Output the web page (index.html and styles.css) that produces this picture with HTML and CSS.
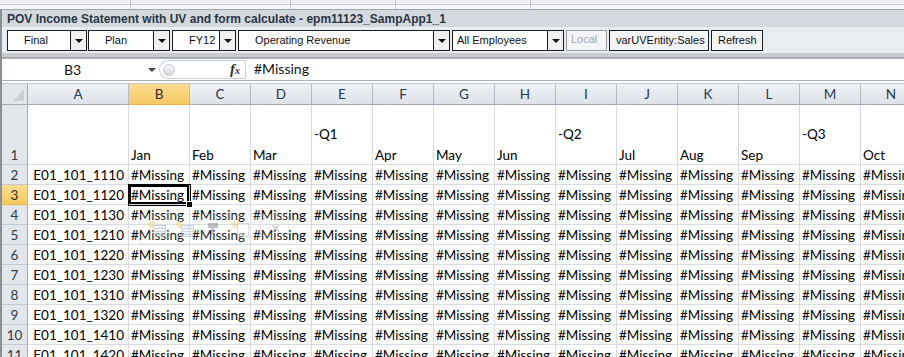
FILE: index.html
```html
<!doctype html>
<html lang="en">
  <head>
    <meta charset="UTF-8" />
    <title>POV Income Statement</title>
    <link rel="stylesheet" href="styles.css">
  </head>
  <body>
    <div class="ribbon-edge">
      <div class="group g1"><span>Start</span></div>
      <div class="group g2"><span>Edit</span></div>
      <div class="group g3"><span>Data</span></div>
      <div class="group g4"><span>General</span></div>
    </div>

    <div class="app">
      <div class="pane-title">POV Income Statement with UV and form calculate - epm11123_SampApp1_1</div>

      <div class="pov-bar">
        <div class="pov w-final"><span class="pov-text">Final</span><span class="pov-arrow"></span></div>
        <div class="pov w-plan"><span class="pov-text">Plan</span><span class="pov-arrow"></span></div>
        <div class="pov w-year"><span class="pov-text">FY12</span><span class="pov-arrow"></span></div>
        <div class="pov w-acct"><span class="pov-text">Operating Revenue</span><span class="pov-arrow"></span></div>
        <div class="pov w-emp"><span class="pov-text left">All Employees</span><span class="pov-arrow"></span></div>
        <div class="pov-btn disabled w-local">Local</div>
        <div class="pov-btn w-var">varUVEntity:Sales</div>
        <div class="pov-btn w-refresh">Refresh</div>
      </div>

      <div class="formula-bar">
        <div class="name-box"><span class="name">B3</span><span class="name-arrow"></span></div>
        <div class="fx-pill"><span class="knob"></span><span class="fx"><i>f</i><small>x</small></span></div>
        <div class="formula">#Missing</div>
      </div>

      <div class="sheet-wrap">
        <div class="sheet">
          <div class="corner"><span class="corner-tri"></span></div>
          <div class="ch">A</div><div class="ch sel">B</div><div class="ch">C</div><div class="ch">D</div><div class="ch">E</div><div class="ch">F</div><div class="ch">G</div><div class="ch">H</div><div class="ch">I</div><div class="ch">J</div><div class="ch">K</div><div class="ch">L</div><div class="ch">M</div><div class="ch">N</div>

          <div class="rh">1</div>
          <div class="c"></div><div class="c">Jan</div><div class="c">Feb</div><div class="c">Mar</div><div class="c q">-Q1<br>&nbsp;</div><div class="c">Apr</div><div class="c">May</div><div class="c">Jun</div><div class="c q">-Q2<br>&nbsp;</div><div class="c">Jul</div><div class="c">Aug</div><div class="c">Sep</div><div class="c q">-Q3<br>&nbsp;</div><div class="c">Oct</div>

          <div class="rh">2</div>
          <div class="c ra">E01_101_1110</div><div class="c">#Missing</div><div class="c">#Missing</div><div class="c">#Missing</div><div class="c">#Missing</div><div class="c">#Missing</div><div class="c">#Missing</div><div class="c">#Missing</div><div class="c">#Missing</div><div class="c">#Missing</div><div class="c">#Missing</div><div class="c">#Missing</div><div class="c">#Missing</div><div class="c">#Missing</div>

          <div class="rh sel">3</div>
          <div class="c ra">E01_101_1120</div><div class="c active">#Missing<span class="handle"></span></div><div class="c">#Missing</div><div class="c">#Missing</div><div class="c">#Missing</div><div class="c">#Missing</div><div class="c">#Missing</div><div class="c">#Missing</div><div class="c">#Missing</div><div class="c">#Missing</div><div class="c">#Missing</div><div class="c">#Missing</div><div class="c">#Missing</div><div class="c">#Missing</div>

          <div class="rh">4</div>
          <div class="c ra">E01_101_1130</div><div class="c">#Missing</div><div class="c">#Missing</div><div class="c">#Missing</div><div class="c">#Missing</div><div class="c">#Missing</div><div class="c">#Missing</div><div class="c">#Missing</div><div class="c">#Missing</div><div class="c">#Missing</div><div class="c">#Missing</div><div class="c">#Missing</div><div class="c">#Missing</div><div class="c">#Missing</div>

          <div class="rh">5</div>
          <div class="c ra">E01_101_1210</div><div class="c">#Missing</div><div class="c">#Missing</div><div class="c">#Missing</div><div class="c">#Missing</div><div class="c">#Missing</div><div class="c">#Missing</div><div class="c">#Missing</div><div class="c">#Missing</div><div class="c">#Missing</div><div class="c">#Missing</div><div class="c">#Missing</div><div class="c">#Missing</div><div class="c">#Missing</div>

          <div class="rh">6</div>
          <div class="c ra">E01_101_1220</div><div class="c">#Missing</div><div class="c">#Missing</div><div class="c">#Missing</div><div class="c">#Missing</div><div class="c">#Missing</div><div class="c">#Missing</div><div class="c">#Missing</div><div class="c">#Missing</div><div class="c">#Missing</div><div class="c">#Missing</div><div class="c">#Missing</div><div class="c">#Missing</div><div class="c">#Missing</div>

          <div class="rh">7</div>
          <div class="c ra">E01_101_1230</div><div class="c">#Missing</div><div class="c">#Missing</div><div class="c">#Missing</div><div class="c">#Missing</div><div class="c">#Missing</div><div class="c">#Missing</div><div class="c">#Missing</div><div class="c">#Missing</div><div class="c">#Missing</div><div class="c">#Missing</div><div class="c">#Missing</div><div class="c">#Missing</div><div class="c">#Missing</div>

          <div class="rh">8</div>
          <div class="c ra">E01_101_1310</div><div class="c">#Missing</div><div class="c">#Missing</div><div class="c">#Missing</div><div class="c">#Missing</div><div class="c">#Missing</div><div class="c">#Missing</div><div class="c">#Missing</div><div class="c">#Missing</div><div class="c">#Missing</div><div class="c">#Missing</div><div class="c">#Missing</div><div class="c">#Missing</div><div class="c">#Missing</div>

          <div class="rh">9</div>
          <div class="c ra">E01_101_1320</div><div class="c">#Missing</div><div class="c">#Missing</div><div class="c">#Missing</div><div class="c">#Missing</div><div class="c">#Missing</div><div class="c">#Missing</div><div class="c">#Missing</div><div class="c">#Missing</div><div class="c">#Missing</div><div class="c">#Missing</div><div class="c">#Missing</div><div class="c">#Missing</div><div class="c">#Missing</div>

          <div class="rh">10</div>
          <div class="c ra">E01_101_1410</div><div class="c">#Missing</div><div class="c">#Missing</div><div class="c">#Missing</div><div class="c">#Missing</div><div class="c">#Missing</div><div class="c">#Missing</div><div class="c">#Missing</div><div class="c">#Missing</div><div class="c">#Missing</div><div class="c">#Missing</div><div class="c">#Missing</div><div class="c">#Missing</div><div class="c">#Missing</div>

          <div class="rh">11</div>
          <div class="c ra">E01_101_1420</div><div class="c">#Missing</div><div class="c">#Missing</div><div class="c">#Missing</div><div class="c">#Missing</div><div class="c">#Missing</div><div class="c">#Missing</div><div class="c">#Missing</div><div class="c">#Missing</div><div class="c">#Missing</div><div class="c">#Missing</div><div class="c">#Missing</div><div class="c">#Missing</div><div class="c">#Missing</div>
        </div>

        <!-- faded paste options toolbar -->
        <div class="mini-toolbar">
          <span class="mt-icon"><span class="spark"></span><span class="sheet-ico"></span></span>
          <span class="mt-icon"><span class="spark"></span><span class="sheet-ico"></span></span>
          <span class="mt-icon"><span class="brush"></span></span>
          <span class="mt-icon"><span class="spark"></span><span class="doc-ico"></span></span>
          <span class="mt-sep"></span>
          <span class="mt-x">&#215;</span>
        </div>
      </div>
    </div>
  </body>
</html>
```

FILE: styles.css
```css
html,
body {
  margin: 0;
  padding: 0;
  background: #ffffff;
  overflow: hidden;
}

body {
  width: 904px;
  height: 357px;
  font-family: "Liberation Sans", Arial, sans-serif;
}

/* bottom edge of the ribbon, only the label feet are visible */
.ribbon-edge {
  display: flex;
  height: 9px;
  background: #eef0f3;
  border-bottom: 1px solid #9ea4ab;
  box-shadow: inset 0 -4px 0 #f6f7f9, inset 0 -5px 0 #c3c8cf;
  overflow: hidden;
}

.group {
  border-right: 1px solid #c3c8cf;
  text-align: center;
  font-size: 12px;
  color: #4c5a6b;
}

.group span {
  display: block;
  margin-top: -11px;
}

.g1 { width: 130px; }
.g2 { width: 159px; }
.g3 { width: 104px; }
.g4 { width: 134px; }

.app {
  border-left: 2px solid #8b9096;
}

.pane-title {
  height: 17px;
  padding-left: 5px;
  background: #d4d9e0;
  font-size: 12px;
  font-weight: bold;
  line-height: 18px;
  color: #2b3542;
  white-space: nowrap;
}

.pov-bar {
  display: flex;
  gap: 2px;
  height: 23px;
  padding: 3px 0 0 5px;
  background: #e9ecf0;
  border-bottom: 4px solid #c8ccd1;
  box-shadow: 0 1px 0 #9ca1a7;
  font-size: 11px;
}

.pov {
  display: flex;
  flex-shrink: 0;
  box-sizing: border-box;
  height: 21px;
  border: 1px solid #1c1c1c;
  background: #ffffff;
}

.pov-text {
  flex: 1;
  padding-left: 16px;
  line-height: 19px;
  color: #111;
  white-space: nowrap;
}

.pov-text.left {
  padding-left: 4px;
}

.pov-arrow {
  position: relative;
  width: 15px;
  border-left: 1px solid #1c1c1c;
  background: #f0f0f0;
}

.pov-arrow::after {
  content: "";
  position: absolute;
  left: 4px;
  top: 8px;
  border-left: 4px solid transparent;
  border-right: 4px solid transparent;
  border-top: 4px solid #111;
}

.w-final { width: 80px; margin-right: -1px; }
.w-plan { width: 82px; }
.w-year { width: 64px; }
.w-acct { width: 212px; }
.w-emp { width: 112px; }

.pov-btn {
  flex-shrink: 0;
  box-sizing: border-box;
  height: 21px;
  padding: 0 6px;
  border: 1px solid #1c1c1c;
  background: #f3f4f6;
  line-height: 19px;
  color: #111;
  white-space: nowrap;
}

.pov-btn.disabled {
  border-color: #9a9ea3;
  color: #a3a6aa;
  line-height: 16px;
  padding: 0 4px;
}

.w-local { width: 41px; }
.w-var { width: 100px; }
.w-refresh { width: 52px; }

/* formula bar */
.formula-bar {
  display: flex;
  height: 21px;
  margin-top: 1px;
  border-top: 1px solid #aab0b7;
  border-bottom: 1px solid #aab0b7;
  box-shadow: 0 2px 0 #ffffff, 0 3px 0 #c6cbd1;
  background: #ffffff;
  font-family: Lato, "Liberation Sans", sans-serif;
  font-size: 14px;
}

.name-box {
  display: flex;
  align-items: center;
  width: 157px;
  box-sizing: border-box;
}

.name {
  flex: 1;
  text-align: center;
  color: #111;
  padding-right: 5px;
}

.name-arrow {
  width: 0;
  height: 0;
  margin-right: 3px;
  border-left: 4px solid transparent;
  border-right: 4px solid transparent;
  border-top: 4px solid #444;
}

.fx-pill {
  display: flex;
  align-items: center;
  justify-content: space-between;
  box-sizing: border-box;
  width: 87px;
  height: 19px;
  margin-top: 1px;
  border: 1px solid #c9ced5;
  border-right: 1px solid #cfd4da;
  border-radius: 10px 0 0 10px;
  background: #ffffff;
}

.knob {
  width: 10px;
  height: 10px;
  margin-left: 3px;
  border-radius: 50%;
  background: linear-gradient(#f4f5f7, #d7dbe0);
  border: 1px solid #c6cbd1;
}

.fx {
  margin-right: 5px;
  font-family: "Liberation Serif", serif;
  font-weight: bold;
  color: #333;
  font-size: 15px;
  line-height: 15px;
}

.fx small {
  font-size: 10px;
  font-style: italic;
}

.formula {
  flex: 1;
  padding-left: 8px;
  line-height: 20px;
  color: #111;
}

/* sheet */
.sheet-wrap {
  position: relative;
  margin-top: 3px;
  overflow: hidden;
}

.sheet {
  display: grid;
  grid-template-columns: 26px 101px repeat(13, 61px);
  grid-template-rows: 21px 60px repeat(11, 20px);
  font-family: Lato, "Liberation Sans", sans-serif;
  font-size: 13.5px;
}

.corner {
  position: relative;
  background: #e3e7ec;
  border-right: 1px solid #9eabb9;
  border-bottom: 1px solid #9eabb9;
}

.corner-tri {
  position: absolute;
  right: 3px;
  bottom: 3px;
  width: 0;
  height: 0;
  border-left: 11px solid transparent;
  border-bottom: 11px solid #c9ced5;
}

.ch {
  background: linear-gradient(#eef1f5, #dfe3e9);
  border-right: 1px solid #b4bcc6;
  border-bottom: 1px solid #9eabb9;
  text-align: center;
  line-height: 21px;
  color: #27394e;
}

.ch.sel,
.rh.sel {
  background: linear-gradient(#f9dc8f, #f6ca62);
  border-right-color: #f0b44a;
  border-bottom-color: #f0b44a;
  color: #2b2b2b;
}

.rh {
  background: #e3e7ec;
  border-right: 1px solid #9eabb9;
  border-bottom: 1px solid #c3cad3;
  text-align: center;
  color: #2f3a47;
  display: flex;
  align-items: flex-end;
  justify-content: center;
  line-height: 17px;
}

.c {
  position: relative;
  display: flex;
  flex-direction: column;
  justify-content: flex-end;
  padding: 0 2px;
  border-right: 1px solid #d8dce2;
  border-bottom: 1px solid #d8dce2;
  line-height: 17px;
  color: #000;
  white-space: nowrap;
  overflow: hidden;
}

.c.q {
  line-height: 20px;
}

.c.ra {
  text-align: right;
  padding-right: 4px;
}

.c.active {
  overflow: visible;
  box-shadow: inset 0 0 0 2px #000, 0 0 0 1px #000;
  z-index: 1;
}

.handle {
  position: absolute;
  right: -4px;
  bottom: -4px;
  width: 5px;
  height: 5px;
  background: #000;
  border: 1px solid #fff;
}

/* faded paste options toolbar */
.mini-toolbar {
  position: absolute;
  left: 137px;
  top: 130px;
  display: flex;
  align-items: center;
  gap: 10px;
  height: 28px;
  padding: 0 8px;
  border: 1px solid rgba(170, 178, 188, 0.35);
  border-radius: 3px;
  background: rgba(240, 242, 245, 0.25);
  opacity: 0.55;
}

.mt-icon {
  position: relative;
  width: 18px;
  height: 16px;
}

.spark {
  position: absolute;
  left: 0;
  top: 0;
  width: 7px;
  height: 7px;
  border-radius: 50%;
  background: #f3d77a;
}

.sheet-ico {
  position: absolute;
  right: 0;
  bottom: 0;
  width: 11px;
  height: 10px;
  border: 1px solid #9fb3cd;
  background: repeating-linear-gradient(#e4ebf5 0 2px, #9fb3cd 2px 3px);
}

.doc-ico {
  position: absolute;
  right: 1px;
  bottom: 0;
  width: 10px;
  height: 12px;
  border: 1px solid #b9c2cc;
  background: #f7f8fa;
}

.brush {
  position: absolute;
  left: 4px;
  top: 2px;
  width: 10px;
  height: 12px;
  background: linear-gradient(#8d8f93 0 45%, transparent 45%),
    linear-gradient(90deg, transparent 35%, #8d8f93 35% 65%, transparent 65%);
}

.mt-sep {
  width: 1px;
  height: 18px;
  background: #c9ced5;
}

.mt-x {
  font-size: 16px;
  color: #9aa2ad;
  line-height: 16px;
}
```
